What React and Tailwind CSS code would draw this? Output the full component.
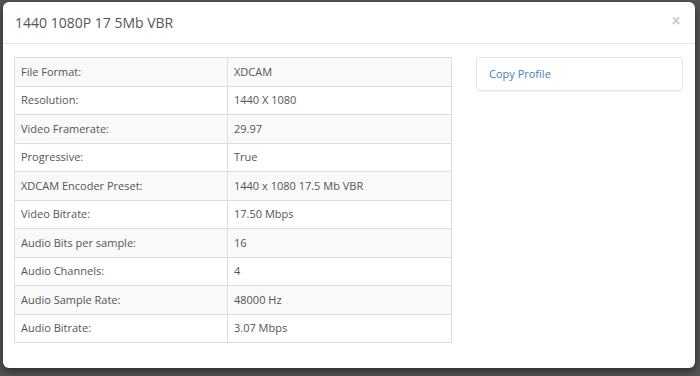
const rows = [
  ["File Format:", "XDCAM"],
  ["Resolution:", "1440 X 1080"],
  ["Video Framerate:", "29.97"],
  ["Progressive:", "True"],
  ["XDCAM Encoder Preset:", "1440 x 1080 17.5 Mb VBR"],
  ["Video Bitrate:", "17.50 Mbps"],
  ["Audio Bits per sample:", "16"],
  ["Audio Channels:", "4"],
  ["Audio Sample Rate:", "48000 Hz"],
  ["Audio Bitrate:", "3.07 Mbps"],
];

const App = () => {
  return (
    <div
      className="w-[700px] h-[376px] bg-[#545454] pt-[2px] pl-[3px] pr-[5px] overflow-hidden"
      style={{ fontFamily: '"Open Sans", "Liberation Sans", sans-serif' }}
    >
      <div className="h-[366px] bg-white rounded-md shadow-[0_3px_9px_rgba(0,0,0,0.5)] flex flex-col">
        <div className="h-[42px] flex items-center justify-between pl-3 pr-[14px] border-b border-[#e5e5e5]">
          <h4 className="text-[14px] text-[#555] font-normal">1440 1080P 17 5Mb VBR</h4>
          <button className="text-[17px] font-bold leading-none text-black opacity-20 -mt-[4px]">×</button>
        </div>
        <div className="flex flex-row pt-[13px] pl-[11px] pr-3 gap-6 items-start">
          <table className="w-[438px] border-collapse border border-[#ddd] text-[11px] text-[#555]">
            <tbody>
              {rows.map(([label, value], i) => (
                <tr key={label} className={i % 2 === 0 ? "h-[28.5px] bg-[#f9f9f9]" : "h-[28.5px] bg-white"}>
                  <td className="w-[213px] border border-[#ddd] px-[6px] py-0">{label}</td>
                  <td className="border border-[#ddd] px-[6px] py-0">{value}</td>
                </tr>
              ))}
            </tbody>
          </table>
          <div className="w-[207px] h-[34px] border border-[#e5e5e5] rounded flex items-center px-3 shadow-[0_1px_1px_rgba(0,0,0,0.05)]">
            <a className="text-[11px] text-[#3f7fc0]">Copy Profile</a>
          </div>
        </div>
      </div>
    </div>
  );
};

export default App;
